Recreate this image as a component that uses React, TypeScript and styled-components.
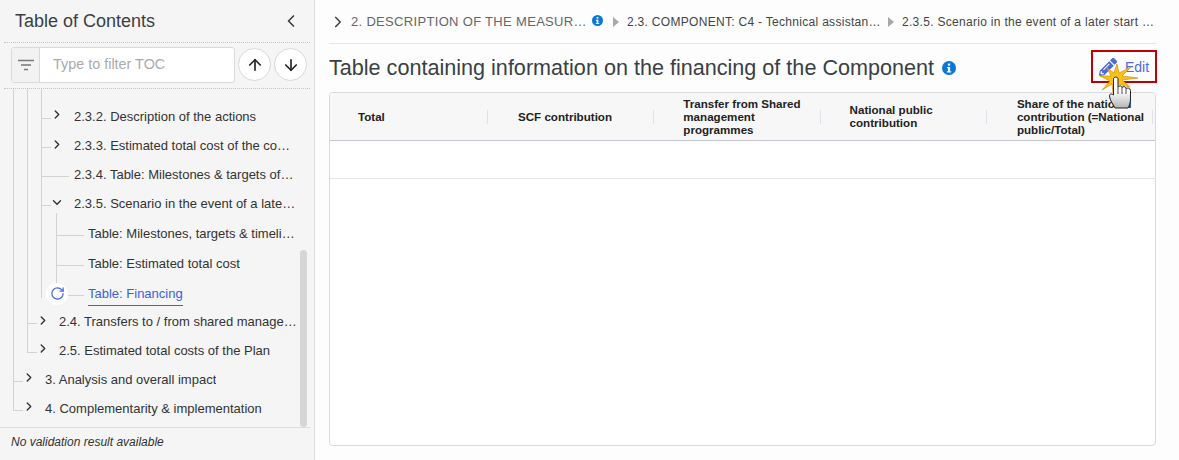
import React from "react";
import styled, { createGlobalStyle } from "styled-components";
import { ArrowDown, ArrowUp, ChevronDown, ChevronLeft, ChevronRight, RotateCw } from "lucide-react";
import { FaPencilAlt } from "react-icons/fa";

const Global = createGlobalStyle`
  html, body { margin: 0; padding: 0; background: #fdfdfd; }
  body { font-family: "Liberation Sans", Arial, sans-serif; color: #333; }
  * { box-sizing: border-box; }
`;

const Page = styled.div`
  display: flex;
  width: 1179px;
  height: 460px;
  overflow: hidden;
`;

const Sidebar = styled.aside`
  position: relative;
  display: flex;
  flex-direction: column;
  width: 315px;
  height: 460px;
  padding-right: 4px;
  background: #f5f5f5;
  border-right: 1px solid #dcdcdc;
`;

const SideHeader = styled.div`
  display: flex;
  align-items: center;
  justify-content: space-between;
  height: 43px;
  margin-left: 4px;
  padding: 0 9px 0 11px;
  border-bottom: 1px dotted #c4c4c4;
  font-size: 18px;
  color: #3a3f45;
`;

const FilterBar = styled.div`
  display: flex;
  align-items: center;
  height: 46px;
  margin-left: 4px;
  padding: 0 3px 2px 7px;
  border-bottom: 1px dotted #c4c4c4;
`;

const FilterBox = styled.div`
  display: flex;
  width: 224px;
  height: 36px;
  border: 1px solid #dadada;
  border-radius: 3px;
  background: #fff;
`;

const FilterAddon = styled.div`
  display: flex;
  align-items: center;
  justify-content: center;
  width: 28px;
  background: #f2f2f2;
  border-right: 1px solid #dadada;
`;

const FilterText = styled.div`
  padding-left: 13px;
  line-height: 32px;
  font-size: 14.4px;
  color: #aaa;
`;

const RoundButton = styled.div`
  display: flex;
  align-items: center;
  justify-content: center;
  width: 33px;
  height: 33px;
  margin-left: 3px;
  border: 1px solid #d8d8d8;
  border-radius: 50%;
  background: #fff;
  color: #222;
  &:first-of-type { margin-left: 4px; }
`;

const Tree = styled.div`
  flex: 1;
  overflow: hidden;
  padding-top: 13px;
`;

const List = styled.ul<{ $indent: number }>`
  list-style: none;
  margin: 0;
  padding: 0 0 0 ${p => p.$indent}px;
`;

const Item = styled.li<{ $top?: number; $end?: number }>`
  position: relative;
  &::before {
    content: "";
    position: absolute;
    left: 0;
    top: ${p => -(p.$top ?? 0)}px;
    bottom: 0;
    width: 1px;
    background: #d2d2d2;
  }
  &:last-child::before { bottom: ${p => (p.$end !== undefined ? `${p.$end}px` : "calc(50% - 2px)")}; }
`;

const Row = styled.div<{ $h: number; $tick: number }>`
  position: relative;
  display: flex;
  align-items: center;
  height: ${p => p.$h}px;
  font-size: 13px;
  color: #333;
  white-space: nowrap;
  &::before {
    content: "";
    position: absolute;
    left: 0;
    top: calc(50% + 1px);
    width: ${p => p.$tick}px;
    height: 1px;
    background: #d2d2d2;
  }
`;

const Toggle = styled.span`
  display: flex;
  align-items: center;
  justify-content: center;
  width: 14px;
  margin-left: 9px;
  margin-top: -4px;
  color: #333;
`;

const Label = styled.span<{ $gap: number; $w?: number; $active?: boolean }>`
  display: block;
  margin-left: ${p => p.$gap}px;
  max-width: ${p => (p.$w ? `${p.$w}px` : "none")};
  overflow: hidden;
  text-overflow: ellipsis;
  color: ${p => (p.$active ? "#3f5de0" : "#333")};
  line-height: 16px;
  margin-top: ${p => (p.$active ? "4px" : "0")};
  padding-bottom: ${p => (p.$active ? "3px" : "0")};
  border-bottom: ${p => (p.$active ? "1px solid #3f5de0" : "none")};
`;

const RefreshBadge = styled.span`
  position: absolute;
  left: -10px;
  top: 50%;
  display: flex;
  align-items: center;
  justify-content: center;
  width: 22px;
  height: 22px;
  margin-top: -11px;
  border-radius: 50%;
  background: #fff;
  color: #4a6ae0;
`;

const Scrollbar = styled.div`
  position: absolute;
  left: 300px;
  top: 250px;
  width: 7px;
  height: 177px;
  border-radius: 4px;
  background: #d6d6d6;
`;

const SideFooter = styled.div`
  height: 33px;
  padding: 7px 0 0 11px;
  border-top: 1px solid #dcdcdc;
  font-size: 12px;
  font-style: italic;
  color: #333;
`;

const Main = styled.main`
  position: relative;
  display: flex;
  flex-direction: column;
  flex: 1;
  padding: 0 23px 14px 14px;
`;

const Crumbs = styled.div`
  display: flex;
  align-items: center;
  height: 44px;
  padding: 0 0 0 3px;
  border-bottom: 1px solid #e6e6e6;
  white-space: nowrap;
`;

const Crumb = styled.span<{ $muted?: boolean; $w: number }>`
  display: block;
  width: ${p => p.$w}px;
  overflow: hidden;
  text-overflow: ellipsis;
  font-size: ${p => (p.$muted ? "13px" : "12px")};
  color: ${p => (p.$muted ? "#666" : "#444")};
  letter-spacing: ${p => (p.$muted ? "0.32px" : "0.3px")};
`;

const CrumbSep = styled.span`
  width: 0;
  height: 0;
  margin: 0 8px 0 7px;
  border-left: 6px solid #a8a8a8;
  border-top: 5px solid transparent;
  border-bottom: 5px solid transparent;
`;

const TitleRow = styled.div`
  display: flex;
  align-items: center;
  justify-content: space-between;
  height: 48px;
`;

const Title = styled.h1`
  display: flex;
  align-items: center;
  gap: 8px;
  margin: 0;
  font-size: 21.6px;
  font-weight: 400;
  color: #3a3f45;
`;

const EditButton = styled.div`
  display: flex;
  align-items: center;
  gap: 8px;
  width: 66px;
  height: 33px;
  margin: 0 -1px 3px 0;
  padding: 0 0 0 6px;
  border: 2px solid #c00000;
  font-size: 14px;
  color: #4a6ae0;
`;

const Table = styled.div`
  flex: 1;
  border: 1px solid #d8dade;
  border-radius: 4px;
  background: #fff;
  overflow: hidden;
`;

const HeadRow = styled.div`
  display: grid;
  grid-template-columns: 158px repeat(4, 166.3px);
  height: 48px;
  background: #f7f7f8;
  border-bottom: 1px solid #c2c5cf;
`;

const HeadCell = styled.div<{ $pad: number }>`
  display: flex;
  align-items: center;
  position: relative;
  padding: 0 0 1px ${p => p.$pad}px;
  font-size: 11.6px;
  font-weight: 700;
  line-height: 13px;
  color: #222;
  &::after {
    content: "";
    position: absolute;
    right: 0;
    top: 17px;
    width: 1px;
    height: 14px;
    background: #dfe2ea;
  }
`;

const EmptyRow = styled.div`
  height: 38px;
  border-bottom: 1px solid #e2e5ea;
`;

const Pointer = styled.svg`
  position: absolute;
  left: 780px;
  top: 62px;
  pointer-events: none;
`;

const InfoSlot = styled.span`
  display: flex;
  margin: -3px 3px 0 5px;
`;

const FirstChevron = styled.span`
  display: flex;
  margin: 1px 4px 0 -3px;
  color: #444;
`;

const InfoIcon = ({ size }: { size: number }) => (
  <svg width={size} height={size} viewBox="0 0 14 14" style={{ flex: "none" }}>
    <circle cx="7" cy="7" r="7" fill="#0b76d6" />
    <rect x="5.9" y="2.6" width="2.2" height="2" fill="#fff" />
    <path d="M5 6h3.1v4.2H9.2v1.2H4.9v-1.2H6V7.2H5z" fill="#fff" />
  </svg>
);

const FilterGlyph = () => (
  <svg width="16" height="12" viewBox="0 0 16 12">
    <path d="M0 1.5h16M3 6h10M6 10.5h4" stroke="#777" strokeWidth="1.6" />
  </svg>
);

type Node = { label: string; h: number; tick: number; gap: number; w?: number; toggle?: "r" | "d"; active?: boolean };

const level3: Node[] = [
  { label: "2.3.2. Description of the actions", h: 29, tick: 10, gap: 10, toggle: "r" },
  { label: "2.3.3. Estimated total cost of the component", h: 30, tick: 10, gap: 10, w: 218, toggle: "r" },
  { label: "2.3.4. Table: Milestones & targets of the component", h: 28, tick: 28, gap: 33, w: 220 },
  { label: "2.3.5. Scenario in the event of a later start date", h: 30, tick: 10, gap: 10, w: 222, toggle: "d" },
];

const level4: Node[] = [
  { label: "Table: Milestones, targets & timeline of the scenario", h: 30, tick: 28, gap: 32, w: 208 },
  { label: "Table: Estimated total cost", h: 30, tick: 28, gap: 32 },
  { label: "Table: Financing", h: 29, tick: 28, gap: 32, active: true },
];

const TocRow = ({ n }: { n: Node }) => (
  <Row $h={n.h} $tick={n.tick}>
    {n.toggle && (
      <Toggle>
        {n.toggle === "r" ? <ChevronRight size={15} strokeWidth={2.4} /> : <ChevronDown size={15} strokeWidth={2.4} />}
      </Toggle>
    )}
    {n.active && (
      <RefreshBadge>
        <RotateCw size={15} strokeWidth={2} />
      </RefreshBadge>
    )}
    <Label $gap={n.gap} $w={n.w} $active={n.active}>{n.label}</Label>
  </Row>
);

export default function App() {
  return (
    <Page>
      <Global />
      <Sidebar>
        <SideHeader>
          <span>Table of Contents</span>
          <ChevronLeft size={20} strokeWidth={2} />
        </SideHeader>
        <FilterBar>
          <FilterBox>
            <FilterAddon><FilterGlyph /></FilterAddon>
            <FilterText>Type to filter TOC</FilterText>
          </FilterBox>
          <RoundButton><ArrowUp size={18} strokeWidth={2.2} /></RoundButton>
          <RoundButton><ArrowDown size={18} strokeWidth={2.2} /></RoundButton>
        </FilterBar>
        <Tree>
          <List $indent={13}>
            <Item $top={16}>
              <List $indent={14}>
                <Item $top={16}>
                  <List $indent={14}>
                    {level3.map((n, i) => (
                      <Item key={n.label} $top={i === 0 ? 16 : 0}><TocRow n={n} /></Item>
                    ))}
                    <Item $end={10}>
                      <List $indent={15}>
                        {level4.map((n, i) => (
                          <Item key={n.label} $top={i === 0 ? 6 : 0}><TocRow n={n} /></Item>
                        ))}
                      </List>
                    </Item>
                  </List>
                </Item>
                <Item><TocRow n={{ label: "2.4. Transfers to / from shared management programmes", h: 28, tick: 10, gap: 9, w: 238, toggle: "r" }} /></Item>
                <Item><TocRow n={{ label: "2.5. Estimated total costs of the Plan", h: 29, tick: 10, gap: 9, toggle: "r" }} /></Item>
              </List>
            </Item>
            <Item><TocRow n={{ label: "3. Analysis and overall impact", h: 29, tick: 10, gap: 9, toggle: "r" }} /></Item>
            <Item><TocRow n={{ label: "4. Complementarity & implementation", h: 29, tick: 10, gap: 9, toggle: "r" }} /></Item>
          </List>
        </Tree>
        <Scrollbar />
        <SideFooter>No validation result available</SideFooter>
      </Sidebar>
      <Main>
        <Crumbs>
          <FirstChevron><ChevronRight size={18} strokeWidth={2.2} /></FirstChevron>
          <Crumb $muted $w={236}>2. DESCRIPTION OF THE MEASURES AND INVESTMENTS</Crumb>
          <InfoSlot><InfoIcon size={11} /></InfoSlot>
          <CrumbSep />
          <Crumb $w={254}>2.3. COMPONENT: C4 - Technical assistance and reinforcement</Crumb>
          <CrumbSep />
          <Crumb $w={253}>2.3.5. Scenario in the event of a later start date of the plan</Crumb>
        </Crumbs>
        <TitleRow>
          <Title>
            Table containing information on the financing of the Component
            <InfoIcon size={14} />
          </Title>
          <EditButton>
            <FaPencilAlt size={18} />
            Edit
          </EditButton>
        </TitleRow>
        <Table>
          <HeadRow>
            <HeadCell $pad={28}>Total</HeadCell>
            <HeadCell $pad={30}>SCF contribution</HeadCell>
            <HeadCell $pad={29}>Transfer from Shared<br />management<br />programmes</HeadCell>
            <HeadCell $pad={29}>National public<br />contribution</HeadCell>
            <HeadCell $pad={30}>Share of the national<br />contribution (=National<br />public/Total)</HeadCell>
          </HeadRow>
          <EmptyRow />
        </Table>
        <Pointer width="46" height="48" viewBox="0 0 46 48">
          <defs>
            <linearGradient id="handShade" x1="0" y1="0" x2="0" y2="1">
              <stop offset="0.45" stopColor="#ffffff" />
              <stop offset="1" stopColor="#b4b4b4" />
            </linearGradient>
          </defs>
          <path d="M43 16L27 14L36 5L24 11L22 2L19 11L12 6L16 14L5 14L15 19L7 28L17 22L18 31L23 22L35 25L27 18Z" fill="#f6c21a" stroke="#d98f00" strokeWidth="0.7" />
          <path d="M18.500 17C18.500 14.500 23 14.500 23 17V25C24 23.500 27 23.500 27 25.500C28 24 31 24.500 31 26.500C32 25.500 35.500 26 35.500 28.500V37C35.500 41 34 44 33 46H20C18 42 14.500 38 14.500 34C14.500 31.500 16.500 31.500 18.500 33Z" fill="url(#handShade)" stroke="#222" strokeWidth="1" />
          <path d="M23 25V32M27 25.500V32M31 26.500V32" stroke="#222" strokeWidth="0.8" />
        </Pointer>
      </Main>
    </Page>
  );
}
